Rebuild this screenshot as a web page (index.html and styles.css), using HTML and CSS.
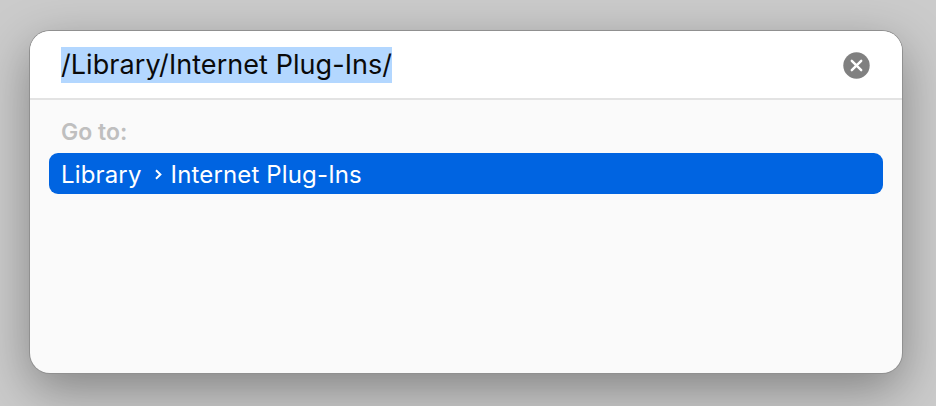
FILE: index.html
```html
<!DOCTYPE html>
<html lang="en">
<head>
  <meta charset="UTF-8" />
  <title>Go to Folder</title>
  <link rel="stylesheet" href="styles.css">
</head>
<body>
  <!-- Go to folder sheet -->
  <div class="sheet">
    <div class="search-row">
      <span class="path-input">/Library/Internet Plug-Ins/</span>
      <svg class="clear-icon" width="27" height="27" viewBox="0 0 27 27">
        <circle cx="13.5" cy="13.5" r="13.2" fill="#808080" />
        <path d="M8.8 8.8 L18.2 18.2 M18.2 8.8 L8.8 18.2" stroke="#fff" stroke-width="2.4" stroke-linecap="round" />
      </svg>
    </div>
    <div class="results">
      <div class="results-label">Go to:</div>
      <div class="result-item">
        <span>Library</span>
        <svg class="chevron" width="9" height="13" viewBox="0 0 9 13">
          <path d="M2 2.2 L6.4 6.5 L2 10.8" fill="none" stroke="#fff" stroke-width="2" />
        </svg>
        <span>Internet Plug-Ins</span>
      </div>
    </div>
  </div>
</body>
</html>
```

FILE: styles.css
```css
body, html {
  margin: 0;
  padding: 0;
  height: 100%;
  overflow: hidden;
  background-color: #cbcbcb;
  font-family: Inter, "Liberation Sans", sans-serif;
}

body {
  box-sizing: border-box;
  padding: 31px 34px 33px 30px;
}

/* Main panel */
.sheet {
  height: 100%;
  box-sizing: border-box;
  display: flex;
  flex-direction: column;
  overflow: hidden;
  background-color: #fafafa;
  border-radius: 20px;
  box-shadow: 0 0 0 1px #909090, 0 16px 50px rgba(0, 0, 0, 0.36);
}

/* Path field */
.search-row {
  height: 67px;
  flex-shrink: 0;
  display: flex;
  align-items: center;
  justify-content: space-between;
  padding: 0 32px 0 31px;
  background-color: #fff;
  border-bottom: 2px solid #e3e3e3;
}

.path-input {
  background-color: #b3d7ff;
  color: #0a0a0a;
  font-size: 27px;
  line-height: 36px;
  letter-spacing: 0.06px;
}

.clear-icon {
  display: block;
  margin-top: 2px;
}

/* Results list */
.results {
  padding: 0 19px;
}

.results-label {
  padding: 19px 0 0 12px;
  height: 34px;
  line-height: 26px;
  font-size: 23px;
  font-weight: 600;
  color: #bfbfbf;
}

.result-item {
  height: 41px;
  box-sizing: border-box;
  display: flex;
  align-items: center;
  gap: 8px;
  padding: 2px 0 0 12px;
  border-radius: 9px;
  background-color: #0064e1;
  color: #fff;
  font-size: 24px;
  letter-spacing: 0.15px;
}

.chevron {
  margin-left: 4px;
}
```
